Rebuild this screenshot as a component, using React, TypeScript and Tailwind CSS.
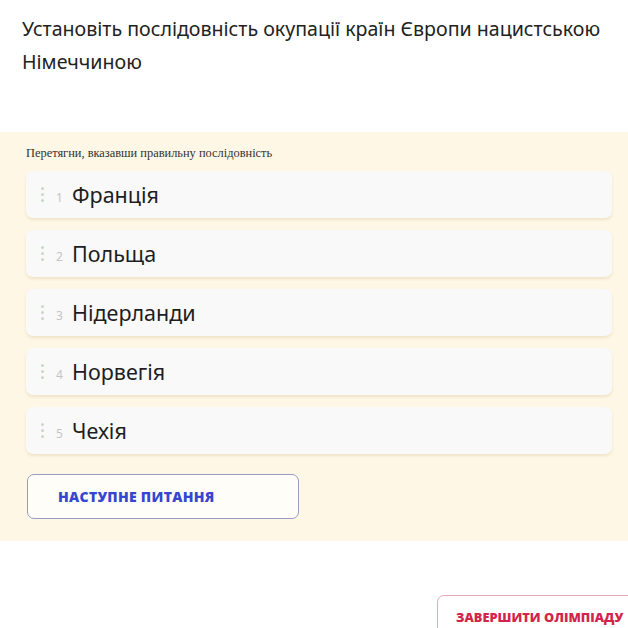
import React from "react";

const items = ["Франція", "Польща", "Нідерланди", "Норвегія", "Чехія"];

function Handle() {
  return (
    <div className="flex flex-col gap-[3px] w-[3px] mr-[12px]">
      <span className="block w-[3px] h-[3px] rounded-full bg-[#c9d6c9]" />
      <span className="block w-[3px] h-[3px] rounded-full bg-[#c9d6c9]" />
      <span className="block w-[3px] h-[3px] rounded-full bg-[#c9d6c9]" />
    </div>
  );
}

export default function App() {
  return (
    <div className="w-[628px] h-[628px] overflow-hidden bg-white" style={{ fontFamily: '"Noto Sans", "Open Sans", sans-serif' }}>
      <div className="pl-[22px] pt-[12px] pr-[10px] text-[19.6px] leading-[33px] text-[#222]">
        Установіть послідовність окупації країн Європи нацистською Німеччиною
      </div>
      <div className="mt-[54px] bg-[#fef7e6] pl-[26px] pr-[16px] pt-[14px] pb-[22px]">
        <div className="text-[12.4px] leading-[14px] text-[#333] mb-[11px]" style={{ fontFamily: '"Liberation Serif", serif' }}>
          Перетягни, вказавши правильну послідовність
        </div>
        <div className="flex flex-col gap-[12px]">
          {items.map((t, i) => (
            <div
              key={t}
              className="h-[47px] rounded-[7px] bg-[#f9f9fa] flex items-center pl-[15px] shadow-[0_2px_3px_rgba(230,215,180,0.6)]"
            >
              <Handle />
              <span className="text-[12px] text-[#c4c4c4] w-[16px] mt-[6px]">{i + 1}</span>
              <span className="text-[21.5px] text-[#1e1e1e] mt-[2px]">{t}</span>
            </div>
          ))}
        </div>
        <button className="mt-[20px] ml-[1px] w-[272px] h-[45px] rounded-[7px] border border-[#9a9bc4] bg-[#fffdf7] text-[#3646d0] text-[14px] font-extrabold tracking-[0.3px] text-left pl-[30px]" style={{ fontFamily: '"Open Sans", "Noto Sans", sans-serif' }}>
          НАСТУПНЕ ПИТАННЯ
        </button>
      </div>
      <div className="flex mt-[54px] pl-[437px]">
        <button className="shrink-0 w-[230px] h-[45px] rounded-[7px] border border-[#e7a9b6] bg-white text-[#d3244b] text-[12.8px] font-extrabold text-left pl-[18px]" style={{ fontFamily: '"Open Sans", "Noto Sans", sans-serif' }}>
          ЗАВЕРШИТИ ОЛІМПІАДУ
        </button>
      </div>
    </div>
  );
}
